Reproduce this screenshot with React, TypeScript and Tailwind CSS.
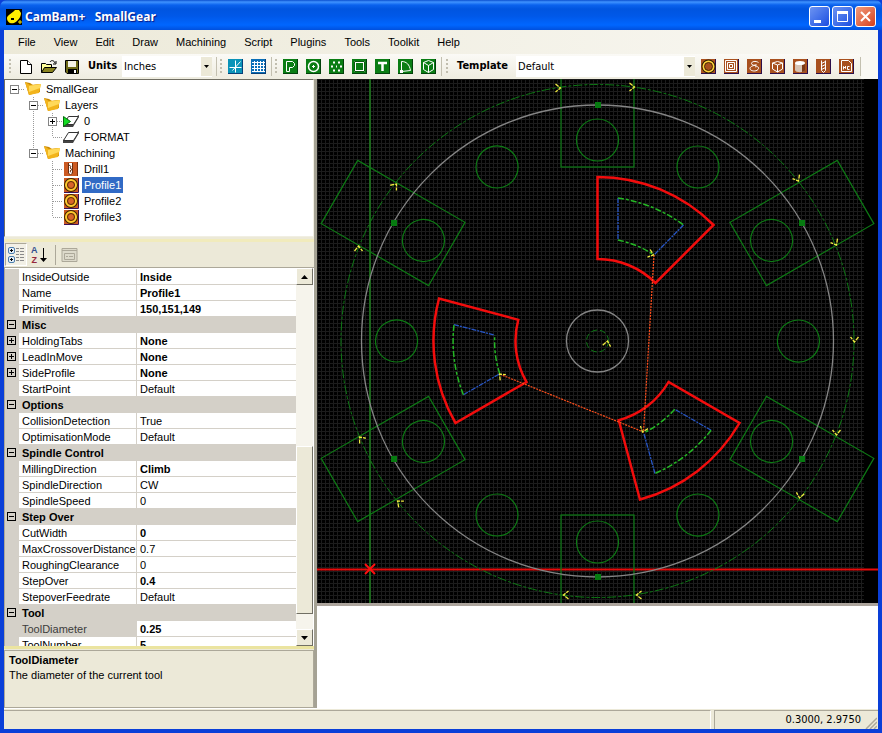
import type { ReactNode } from "react";
import clsx from "clsx";

const MENUS = [
  "File",
  "View",
  "Edit",
  "Draw",
  "Machining",
  "Script",
  "Plugins",
  "Tools",
  "Toolkit",
  "Help",
];

type Cell = "blank" | "line" | "tee" | "elbow" | "plus" | "minus" | "minusTop" | "minusEnd";
type IconKind = "folder" | "activeLayer" | "layer" | "drill" | "profile";

interface TreeNode {
  label: string;
  icon: IconKind;
  cells: Cell[];
  selected?: boolean;
}

const TREE: TreeNode[] = [
  { label: "SmallGear", icon: "folder", cells: ["minusTop"] },
  { label: "Layers", icon: "folder", cells: ["blank", "minus"] },
  { label: "0", icon: "activeLayer", cells: ["blank", "line", "plus"] },
  { label: "FORMAT", icon: "layer", cells: ["blank", "line", "elbow"] },
  { label: "Machining", icon: "folder", cells: ["blank", "minusEnd"] },
  { label: "Drill1", icon: "drill", cells: ["blank", "blank", "tee"] },
  { label: "Profile1", icon: "profile", cells: ["blank", "blank", "tee"], selected: true },
  { label: "Profile2", icon: "profile", cells: ["blank", "blank", "tee"] },
  { label: "Profile3", icon: "profile", cells: ["blank", "blank", "elbow"] },
];

interface Property {
  name: string;
  value?: string;
  bold?: boolean;
  expandable?: boolean;
  selected?: boolean;
}

const PROPERTIES: Property[] = [
  { name: "InsideOutside", value: "Inside", bold: true },
  { name: "Name", value: "Profile1", bold: true },
  { name: "PrimitiveIds", value: "150,151,149", bold: true },
  { name: "Misc" },
  { name: "HoldingTabs", value: "None", bold: true, expandable: true },
  { name: "LeadInMove", value: "None", bold: true, expandable: true },
  { name: "SideProfile", value: "None", bold: true, expandable: true },
  { name: "StartPoint", value: "Default" },
  { name: "Options" },
  { name: "CollisionDetection", value: "True" },
  { name: "OptimisationMode", value: "Default" },
  { name: "Spindle Control" },
  { name: "MillingDirection", value: "Climb", bold: true },
  { name: "SpindleDirection", value: "CW" },
  { name: "SpindleSpeed", value: "0" },
  { name: "Step Over" },
  { name: "CutWidth", value: "0", bold: true },
  { name: "MaxCrossoverDistance", value: "0.7" },
  { name: "RoughingClearance", value: "0" },
  { name: "StepOver", value: "0.4", bold: true },
  { name: "StepoverFeedrate", value: "Default" },
  { name: "Tool" },
  { name: "ToolDiameter", value: "0.25", bold: true, selected: true },
  { name: "ToolNumber", value: "5", bold: true },
];

const DRAW_TOOLS: { label: string; art: ReactNode }[] = [
  { label: "Polyline", art: <path d="M3.500 12.500v-10h6l2 2v2l-2 2h-3v4z" /> },
  {
    label: "Circle",
    art: (
      <>
        <circle cx="7.500" cy="7.500" r="5" strokeWidth="1.500" />
        <path d="M6 7.500h3M7.500 6v3" />
      </>
    ),
  },
  {
    label: "Point list",
    art: <path d="M4 3.500h2M9 3.500h2M2 7.500h2M11 7.500h2M4 11.500h2M9 11.500h2M7 7.500h1" strokeWidth="2" />,
  },
  {
    label: "Rectangle",
    art: (
      <>
        <path d="M3 3h9v9H3z" strokeWidth="2" />
        <path d="M2.500 2.500h10v10h-10z" stroke="#0a5a10" />
      </>
    ),
  },
  { label: "Text", art: <path d="M3 4h9M7.500 4v8" strokeWidth="2.500" /> },
  {
    label: "Arc",
    art: (
      <>
        <path d="M3.500 12.500v-10c5 0 8 3 9 9l-9 1z" />
        <path d="M2 11h3v3H2z" fill="#fff" stroke="none" />
      </>
    ),
  },
  { label: "Surface", art: <path d="M7.500 1.500l5 2v7l-5 3-5-3v-7zM2.500 3.500l5 3 5-3M7.500 6.500v7" /> },
];

const MACHINE_TOOLS: { label: string; art: ReactNode }[] = [
  {
    label: "Profile",
    art: (
      <>
        <circle cx="7.500" cy="7.500" r="6" stroke="#2a1c00" strokeWidth="2" />
        <circle cx="7.500" cy="7.500" r="5" stroke="#ffd23e" strokeWidth="2" />
        <circle cx="7.500" cy="7.500" r="4" stroke="#4a2c00" />
      </>
    ),
  },
  { label: "Pocket", art: <path d="M1.500 1.500h11v11h-11zM3.500 3.500h7v7h-7zM5.500 5.500h3v3h-3z" /> },
  { label: "Engrave", art: <path d="M11.500 3.500c-3-2-7-1-7 1s3 2 5 1.500c-4 .5-7 2-6.500 4s6 3 8 .5-1-3.500-3-2.500" /> },
  { label: "3D Surface", art: <path d="M7.500 2.500l5 1.500v6l-5 3-5-3V4zM2.500 4l5 2 5-2M7.500 6v7" /> },
  {
    label: "Lathe",
    art: (
      <>
        <path d="M2 4v7c0 3 10 3 10 0V4z" fill="#d8c4b4" stroke="none" />
        <path d="M9 4v9c2 0 3-1 3-2V4z" fill="#7b3a18" stroke="none" />
        <ellipse cx="7" cy="4" rx="5" ry="2" fill="#fff" stroke="none" />
      </>
    ),
  },
  { label: "Drill", art: <path d="M5.500 1.500v10l2 2 2-2v-10M5.500 4.500l4-2M5.500 7.500l4-2M5.500 10.500l4-2" /> },
  { label: "MOP from NC file", art: <path d="M2.500 1.500h7l3 3v8h-10zM4.500 10.500v-3l2 2v-2.500M10.500 7.500h-2v3h2" /> },
];

function ToolButton({
  label,
  className,
  children,
}: {
  label: string;
  className: string;
  children: ReactNode;
}) {
  return (
    <button
      type="button"
      aria-label={label}
      className={clsx("h-[15px] w-[15px] shrink-0 border-r border-b", className)}
    >
      <svg viewBox="0 0 15 15" className="block h-[15px] w-[15px]" fill="none" stroke="#fff">
        {children}
      </svg>
    </button>
  );
}

function Grip() {
  return (
    <svg viewBox="0 0 3 17" className="h-[17px] w-[3px] shrink-0" fill="#c1beaf">
      {[1, 5, 9, 13].map((y) => (
        <rect key={y} x="0" y={y} width="2" height="2" />
      ))}
    </svg>
  );
}

function Divider() {
  return <div className="h-[19px] w-px shrink-0 bg-[#c3c0b0]" />;
}

function ToolSelect({ id, value, className }: { id: string; value: string; className: string }) {
  return (
    <div className={clsx("relative h-[21px] bg-white", className)}>
      <select
        id={id}
        className="h-full w-full appearance-none bg-transparent pt-px pr-4 pl-[2px] text-[11px] outline-none"
        defaultValue={value}
      >
        <option>{value}</option>
      </select>
      <span className="pointer-events-none absolute inset-y-px right-0 flex w-[11px] items-center justify-center bg-[#ece9d8]">
        <svg viewBox="0 0 5 3" className="h-[3px] w-[5px]">
          <path d="M0 0h5L2.500 3z" />
        </svg>
      </span>
    </div>
  );
}

function TitleBar() {
  return (
    <header className="flex h-[30px] shrink-0 items-center rounded-t-[7px] bg-[linear-gradient(#0a4fd0_0,#3f93ff_2px,#0a62ee_5px,#0055e0_9px,#0058e8_16px,#0066ff_25px,#0050dd_30px)] pt-[3px] pr-[6px] pl-[6px]">
      <svg viewBox="0 0 16 16" className="mr-[3px] h-4 w-4">
        <rect width="16" height="16" fill="#000" />
        <path d="M1 9c0-3 6-5 8-8h4l2 3c0 4-3 8-7 10-4 1-7-1-7-5z" fill="#ffee00" />
        <path d="M5 9h3v2H5z" />
        <path d="M12 13h4M14 11v4" stroke="#ffee00" />
      </svg>
      <h1 className="flex-1 font-['Noto_Sans','Open_Sans',sans-serif] text-[12px] font-bold whitespace-pre text-white [text-shadow:1px_1px_1px_#0a1883]">
        CamBam+   SmallGear
      </h1>
      <div className="flex gap-[2px]">
        <button
          type="button"
          aria-label="Minimize"
          className="h-[21px] w-[21px] rounded-[3px] border border-white bg-linear-to-br from-[#6d93f2] to-[#1c4be0]"
        >
          <svg viewBox="0 0 19 19">
            <path d="M4 13h7v3H4z" fill="#fff" />
          </svg>
        </button>
        <button
          type="button"
          aria-label="Maximize"
          className="h-[21px] w-[21px] rounded-[3px] border border-white bg-linear-to-br from-[#6d93f2] to-[#1c4be0]"
        >
          <svg viewBox="0 0 19 19" fill="none" stroke="#fff">
            <path d="M4.500 5.500h10v9h-10z" />
            <path d="M4 5.500h11" strokeWidth="3" />
          </svg>
        </button>
        <button
          type="button"
          aria-label="Close"
          className="h-[21px] w-[21px] rounded-[3px] border border-white bg-linear-to-br from-[#f09a7c] to-[#d43c14]"
        >
          <svg viewBox="0 0 19 19" stroke="#fff" strokeWidth="2">
            <path d="M5 5l9 9M14 5l-9 9" />
          </svg>
        </button>
      </div>
    </header>
  );
}

function Toolbar() {
  return (
    <div className="flex h-[25px] shrink-0 items-center bg-linear-to-b from-[#fbfaf6] to-[#eeece0] pl-[5px]">
      <Grip />
      <div className="flex items-center gap-2 pl-[7px]">
        <button type="button" aria-label="New">
          <svg viewBox="0 0 14 16" className="h-4 w-[14px]" fill="#fff" stroke="#000">
            <path d="M1.500 1.500h7l4 4v9h-11z" />
            <path d="M8.500 1.500v4h4" />
          </svg>
        </button>
        <button type="button" aria-label="Open">
          <svg viewBox="0 0 16 16" className="h-4 w-4" stroke="#000">
            <path d="M.5 13.500v-9h4l1 1h5v3" fill="#ffff99" />
            <path d="M.5 13.500l3-5h12l-4 5z" fill="#8a8420" />
            <path d="M9 3c1-2 4-2 5 1M15 2v3h-3" fill="none" />
          </svg>
        </button>
        <button type="button" aria-label="Save">
          <svg viewBox="0 0 15 16" className="h-4 w-[15px]">
            <path d="M.5 1.500h13v13H2l-1.500-1.500z" fill="#6e6b18" stroke="#000" />
            <path d="M3 2h8v6H3z" fill="#f4f2e6" />
            <path d="M3 10h9v4H3z" />
            <path d="M9 11h2v3H9z" fill="#fff" />
          </svg>
        </button>
      </div>
      <label htmlFor="units" className="pr-[5px] pl-2 text-[11px] font-bold">
        Units
      </label>
      <ToolSelect id="units" value="Inches" className="mr-1 w-[90px]" />
      <Divider />
      <div className="flex items-center pr-[5px] pl-[3px]">
        <Grip />
        <div className="flex gap-2 pl-[5px]">
          <ToolButton label="Snap to objects" className="border-[#063f78] bg-[#0a93b8]">
            <path d="M1.500 8.500h12M7.500 1.500v12M12.500 2.500l-8 9" />
          </ToolButton>
          <ToolButton label="Show grid" className="border-[#063f78] bg-[#0a6fb8]">
            <path d="M3.500 2v11M6.500 2v11M9.500 2v11M12.500 2v11M1 3.500h13M1 6.500h13M1 9.500h13M1 12.500h13" />
          </ToolButton>
        </div>
      </div>
      <Divider />
      <div className="flex items-center pr-[5px] pl-[3px]">
        <Grip />
        <div className="flex gap-2 pl-[5px]">
          {DRAW_TOOLS.map((tool) => (
            <ToolButton key={tool.label} label={tool.label} className="border-[#03420b] bg-[#0a7d14]">
              {tool.art}
            </ToolButton>
          ))}
        </div>
      </div>
      <Divider />
      <div className="flex min-w-0 flex-1 items-center pl-1">
        <Grip />
        <label htmlFor="template" className="pr-2 pl-2 text-[11px] font-bold">
          Template
        </label>
        <ToolSelect id="template" value="Default" className="min-w-0 flex-1" />
        <div className="flex gap-2 pr-[6px] pl-[6px]">
          {MACHINE_TOOLS.map((tool) => (
            <ToolButton key={tool.label} label={tool.label} className="border-[#2c0f4a] bg-[#a8501e]">
              {tool.art}
            </ToolButton>
          ))}
        </div>
      </div>
      <Divider />
      <div className="h-full w-[17px] bg-[#f9f8f3]" />
    </div>
  );
}

function TreeCell({ kind }: { kind: Cell }) {
  const isBox = kind === "plus" || kind.startsWith("minus");
  return (
    <svg viewBox="0 0 19 16" className="h-4 w-[19px] shrink-0" fill="none" stroke="#9a9a9a">
      {kind !== "blank" && kind !== "elbow" && kind !== "minusTop" && kind !== "minusEnd" && (
        <path d="M9.500 0v16" strokeDasharray="1 1" />
      )}
      {(kind === "elbow" || kind === "minusEnd") && <path d="M9.500 0v8" strokeDasharray="1 1" />}
      {kind !== "blank" && kind !== "line" && <path d="M10 8.500h9" strokeDasharray="1 1" />}
      {isBox && (
        <>
          <rect x="5.500" y="4.500" width="8" height="8" fill="#fff" stroke="#848484" />
          <path d="M7 8.500h5" stroke="#000" />
        </>
      )}
      {kind === "plus" && <path d="M9.500 6v5" stroke="#000" />}
    </svg>
  );
}

function TreeIcon({ kind }: { kind: IconKind }) {
  return (
    <svg viewBox="0 0 18 16" className="h-4 w-[18px] shrink-0">
      {kind === "folder" && (
        <>
          <path d="M1 1l5 1 3 2 7-1v8L5 14z" fill="#c98a06" />
          <path d="M1 1l5 3 11-1-2 9-10 2z" fill="#f2b41c" />
          <path d="M5 5l12-2-1 4-11 4z" fill="#ffd95a" />
        </>
      )}
      {(kind === "layer" || kind === "activeLayer") && (
        <>
          <path d="M1 11v3h10l6-10v-2z" fill="#444" />
          <path d="M6.500 3.500h10l-5 8h-10z" fill="#fff" stroke="#333" />
        </>
      )}
      {kind === "activeLayer" && <path d="M1.500 3.500l7 5-7 5z" fill="#12dd22" stroke="#056b0c" />}
      {kind === "drill" && (
        <>
          <path d="M2 1h14v14H2z" fill="#cc5a22" />
          <path d="M6.500 2v10l2 2 2-2V2" fill="#fff" stroke="#6a2e10" />
          <path d="M7 4l2 1.500-1 1.500 2 1.500-2 1.500 1 1.500" fill="none" stroke="#6a2e10" />
          <path d="M15.500 1v14" stroke="#7a2e0c" />
        </>
      )}
      {kind === "profile" && (
        <>
          <path d="M2 1h14v14H2z" fill="#cc5a22" />
          <circle cx="9" cy="8" r="6" fill="none" stroke="#3c2400" strokeWidth="2" />
          <circle cx="9" cy="8" r="5" fill="#d8642a" stroke="#ffcb2e" strokeWidth="2" />
          <circle cx="9" cy="8" r="3.500" fill="none" stroke="#5a3200" />
          <path d="M2 15.500h14.500V1" fill="none" stroke="#3a1258" />
        </>
      )}
    </svg>
  );
}

function ProjectTree() {
  return (
    <ul className="h-[158px] shrink-0 overflow-hidden border border-t-[#716f64] border-r-[#f1efe2] border-b-[#f1efe2] border-l-[#716f64] bg-white pt-px">
      {TREE.map((node) => (
        <li key={node.label} className="flex h-4 items-center">
          {node.cells.map((cell, i) => (
            <TreeCell key={i} kind={cell} />
          ))}
          <TreeIcon kind={node.icon} />
          <button
            type="button"
            className={clsx(
              "ml-[2px] h-4 px-[2px] text-[11px] leading-4",
              node.selected && "bg-[#316ac5] text-white",
            )}
          >
            {node.label}
          </button>
        </li>
      ))}
    </ul>
  );
}

function PropertyToolbar() {
  return (
    <div className="flex h-[26px] shrink-0 items-center border-b border-[#aca899] bg-[#ece9d8] pl-px">
      <button
        type="button"
        aria-label="Categorized"
        className="flex h-[23px] w-[22px] items-center justify-center border border-[#aca899] border-r-white border-b-white bg-[#f2f0e6]"
      >
        <svg viewBox="0 0 17 17" className="h-[17px] w-[17px]" fill="none">
          <rect x=".5" y="1.500" width="6" height="6" rx="1.500" stroke="#4d7fae" fill="#e4eef8" />
          <rect x=".5" y="10.500" width="6" height="6" rx="1.500" stroke="#4d7fae" fill="#e4eef8" />
          <path d="M2 4.500h3M3.500 3v3M2 13.500h3M3.500 12v3" stroke="#000" />
          <path
            d="M8 2.500h3M12 2.500h4M8 5.500h3M12 5.500h4M8 8.500h3M12 8.500h4M8 11.500h3M12 11.500h4M8 14.500h3M12 14.500h4"
            stroke="#8a8a8a"
          />
        </svg>
      </button>
      <button type="button" aria-label="Alphabetical" className="ml-1 flex h-[20px] items-center">
        <span className="flex flex-col font-['Liberation_Sans',sans-serif] text-[9px] leading-[10px] font-bold">
          <span className="text-[#31508f]">A</span>
          <span className="text-[#96283c]">Z</span>
        </span>
        <svg viewBox="0 0 9 16" className="ml-px h-4 w-[9px]">
          <path d="M4 1h1v10h3l-3.500 4L1 11h3z" />
        </svg>
      </button>
      <div className="mx-[5px] ml-[7px] h-5 w-px bg-[#aca899]" />
      <button type="button" aria-label="Property pages" disabled>
        <svg viewBox="0 0 17 16" className="block h-4 w-[17px]" fill="none" stroke="#aca899">
          <path d="M1 1.500h15v13H1z" fill="#dddacb" />
          <path d="M1 3.500h15M3.500 6.500h10v6h-10zM5 9.500h2M8 9.500h4" />
        </svg>
      </button>
    </div>
  );
}

function Expander({ open }: { open: boolean }) {
  return (
    <svg viewBox="0 0 9 9" className="block h-[9px] w-[9px]" fill="none" stroke="#000">
      <rect x=".5" y=".5" width="8" height="8" />
      <path d="M2 4.500h5" />
      {!open && <path d="M4.500 2v5" />}
    </svg>
  );
}

function PropertyTable() {
  return (
    <table className="w-full table-fixed border-separate border-spacing-0 text-[11px] leading-[14px]">
      <colgroup>
        <col className="w-[14px]" />
        <col className="w-[118px]" />
        <col />
      </colgroup>
      <tbody>
        {PROPERTIES.map((prop) =>
          prop.value === undefined ? (
            <tr key={prop.name} className="h-4 bg-[#d4d0c8]">
              <td className="p-0 pb-[2px] pl-[2px]">
                <Expander open />
              </td>
              <th colSpan={2} className="p-0 pt-px pb-px pl-[3px] text-left font-bold">
                {prop.name}
              </th>
            </tr>
          ) : (
            <tr key={prop.name} className="h-4">
              <td className="bg-[#d4d0c8] p-0 pb-[2px] pl-[2px]">
                {prop.expandable && <Expander open={false} />}
              </td>
              <th
                className={clsx(
                  "border-r border-b border-[#d4d0c8] p-0 pt-px pl-[3px] text-left font-normal",
                  prop.selected && "bg-[#d4d0c8] text-[#3c3c3c]",
                )}
              >
                {prop.name}
              </th>
              <td
                className={clsx(
                  "border-b border-[#d4d0c8] p-0 pt-px pl-[3px]",
                  prop.bold && "font-bold",
                )}
              >
                {prop.value}
              </td>
            </tr>
          ),
        )}
      </tbody>
    </table>
  );
}

function ScrollBar() {
  const face =
    "flex shrink-0 items-center justify-center border border-[#fff] border-r-[#716f64] border-b-[#716f64] bg-[#ece9d8]";
  return (
    <div className="mr-px flex w-[17px] shrink-0 flex-col bg-[#f6f4ec]">
      <button type="button" aria-label="Scroll up" className={clsx(face, "h-[17px]")}>
        <svg viewBox="0 0 7 4" className="h-1 w-[7px]">
          <path d="M0 4h7L3.500 0z" />
        </svg>
      </button>
      <div className="h-[161px] shrink-0" />
      <div className={clsx(face, "h-[168px]")} />
      <div className="flex-1" />
      <button type="button" aria-label="Scroll down" className={clsx(face, "h-[17px]")}>
        <svg viewBox="0 0 7 4" className="h-1 w-[7px]">
          <path d="M0 0h7L3.500 4z" />
        </svg>
      </button>
    </div>
  );
}

// Direction chevrons on the toolpaths: x, y, heading in degrees
const ARROWS = [
  [-37, -253, 0],
  [37, -254, 0],
  [201, -160, 60],
  [239, -96, 60],
  [257, 1, 90],
  [239, 94, 90],
  [202, 157, 100],
  [39, 254, 180],
  [-34, 254, 180],
  [-200, 160, 220],
  [-238, 96, 230],
  [-239, -95, 270],
  [-201, -157, 310],
  [10, 0, 280],
  [-98, 33, 225],
  [56, -86, 20],
  [45, 91, 110],
];

function GearDrawing() {
  return (
    <svg
      viewBox="0 0 561 524"
      preserveAspectRatio="xMinYMin slice"
      className="block min-h-0 w-full flex-1 bg-black"
      fill="none"
      role="img"
      aria-label="SmallGear drawing"
    >
      <defs>
        <pattern id="grid" width="4" height="4" patternUnits="userSpaceOnUse">
          <path d="M0 .5h4M.5 0v4" stroke="#1c1c1c" />
        </pattern>
      </defs>
      <rect width="547" height="524" fill="url(#grid)" />
      <path d="M53 0v524" stroke="#1d661d" strokeWidth="2" />
      <path d="M0 490.500h561" stroke="#e80a0a" strokeWidth="2" />
      <g transform="translate(280.500 262)">
        {[0, 60, 120, 180, 240, 300].map((angle) => (
          <g key={angle} transform={`rotate(${angle})`} stroke="#0d7a14" strokeWidth="1.200">
            <rect x="-36.500" y="-298" width="73" height="124" />
            <circle cy="-201" r="21" />
            <circle cx="100.500" cy="-174" r="21" />
          </g>
        ))}
        <circle r="256.500" stroke="#0d7a14" strokeDasharray="9 2 3 2" />
        <circle r="236" stroke="#858585" strokeWidth="1.300" />
        <circle r="31" stroke="#858585" strokeWidth="1.300" />
        <circle r="11" stroke="#0d7a14" strokeDasharray="6 3" />
        {[0, 60, 120, 180, 240, 300].map((angle) => {
          const a = (angle * Math.PI) / 180;
          return (
            <rect
              key={angle}
              x={Math.round(236 * Math.sin(a)) - 2.5}
              y={Math.round(-236 * Math.cos(a)) - 3}
              width="6"
              height="6"
              fill="#067a10"
            />
          );
        })}
        {[0, 120, 240].map((angle) => (
          <g key={angle} transform={`rotate(${angle})`}>
            <path
              d="M0 -164A164 164 0 0 1 116 -116L58 -58A82 82 0 0 0 0 -82Z"
              stroke="#f20d0d"
              strokeWidth="2.500"
            />
            <path
              d="M20.500 -143V-101M86 -116L56.500 -86"
              stroke="#2857c8"
              strokeWidth="1.300"
              strokeDasharray="5 1 2 1"
            />
            <path
              d="M20.500 -143A144.500 144.500 0 0 1 86 -116M20.500 -101A103 103 0 0 1 56.500 -86"
              stroke="#25b825"
              strokeWidth="1.500"
              strokeDasharray="6 2 3 2"
            />
          </g>
        ))}
        <path d="M56.500 -86L46 91L-98 33" stroke="#ff4f1c" strokeWidth="1.200" strokeDasharray="2 1" />
        {ARROWS.map(([x, y, heading]) => (
          <path
            key={`${x},${y}`}
            d="M-5 -4L0 0L-5 4"
            transform={`translate(${x} ${y}) rotate(${heading})`}
            stroke="#f0ec40"
            strokeWidth="1.300"
            strokeDasharray="4 1"
          />
        ))}
      </g>
      <path d="M48 485l10 10M58 485l-10 10" stroke="#ff1010" strokeWidth="2" />
    </svg>
  );
}

function StatusBar() {
  return (
    <footer className="flex h-[21px] shrink-0 items-stretch gap-[3px] border-t border-white bg-[#ece9d8] pt-px">
      <div className="flex-1 border-t border-r border-[#aca899] border-r-white" />
      <div className="flex w-[164px] border-t border-l border-[#aca899] pr-px">
        <output className="flex-1 pr-[3px] text-right text-[11px] leading-[18px]">
          0.3000, 2.9750
        </output>
        <svg viewBox="0 0 13 13" className="mt-auto h-[13px] w-[13px]" stroke="#aca899">
          <path d="M2 13L13 2M6 13l7-7M10 13l3-3" strokeWidth="1.500" />
        </svg>
      </div>
    </footer>
  );
}

export default function App() {
  return (
    <div className="flex h-screen flex-col bg-[#0a3fd8] font-['DejaVu_Sans_Condensed','DejaVu_Sans',sans-serif] text-[11px] text-black">
      <TitleBar />
      <div className="flex min-h-0 flex-1 flex-col border-x-4 border-b-4 border-[#0a3fd8] bg-[#ece9d8]">
        <nav className="flex h-6 shrink-0 items-center gap-[2px] bg-linear-to-r from-[#ece9d8] to-[#f9f8f3] pl-[6px] font-['Liberation_Sans',Arial,sans-serif]">
          {MENUS.map((menu) => (
            <button key={menu} type="button" className="px-2 text-[11px]">
              {menu}
            </button>
          ))}
        </nav>
        <Toolbar />
        <main className="flex min-h-0 flex-1">
          <aside className="flex w-[310px] shrink-0 flex-col font-['Liberation_Sans',Arial,sans-serif]">
            <ProjectTree />
            <div className="mt-[2px] h-[3px] shrink-0 bg-[#f1ebbc]" />
            <PropertyToolbar />
            <div className="flex min-h-0 flex-1 border-l border-[#aca899] bg-white">
              <div className="min-w-0 flex-1 overflow-hidden pt-px">
                <PropertyTable />
              </div>
              <ScrollBar />
            </div>
            <div className="h-[3px] shrink-0 bg-[#ebe4a0]" />
            <section className="mt-px h-[58px] shrink-0 border border-[#aca899] px-1 pt-[2px] leading-[15px]">
              <h2 className="font-bold">ToolDiameter</h2>
              <p>The diameter of the current tool</p>
            </section>
          </aside>
          <div className="w-[3px] shrink-0 bg-[#a5a294]" />
          <div className="flex min-w-0 flex-1 flex-col">
            <GearDrawing />
            <div className="h-[3px] shrink-0 bg-[#aca49c]" />
            <textarea
              aria-label="Output"
              readOnly
              className="block h-[102px] shrink-0 resize-none bg-white outline-none"
            />
          </div>
        </main>
        <StatusBar />
      </div>
    </div>
  );
}
